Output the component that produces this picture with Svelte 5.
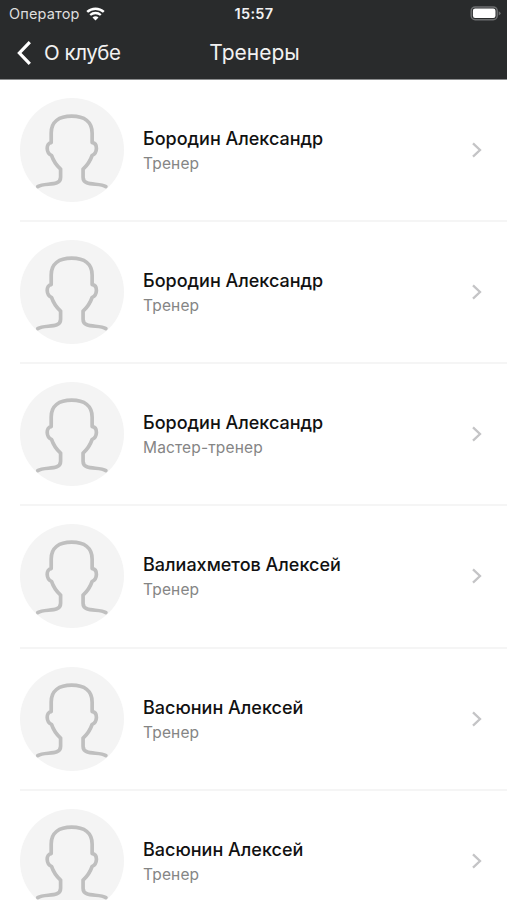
<script>
  const trainers = [
    { name: 'Бородин Александр', role: 'Тренер' },
    { name: 'Бородин Александр', role: 'Тренер' },
    { name: 'Бородин Александр', role: 'Мастер-тренер' },
    { name: 'Валиахметов Алексей', role: 'Тренер' },
    { name: 'Васюнин Алексей', role: 'Тренер' },
    { name: 'Васюнин Алексей', role: 'Тренер' }
  ];
</script>

<div class="screen">
  <header>
    <div class="status">
      <div class="carrier">
        <span>Оператор</span>
        <svg class="wifi" width="19" height="14" viewBox="0 0 19 14" fill="none" stroke="#fff">
          <path d="M1.2 4.9C5.8 .6 13.2 .6 17.8 4.9" stroke-width="2.5" />
          <path d="M4.2 8C7.2 5.3 11.8 5.3 14.8 8" stroke-width="2.3" />
          <path d="M6.5 10.4C8.2 8.9 10.8 8.9 12.5 10.4L9.5 13.5Z" fill="#fff" stroke="none" />
        </svg>
      </div>
      <time>15:57</time>
      <svg class="battery" width="31" height="15" viewBox="0 0 31 15">
        <rect x="1.2" y=".9" width="26" height="12.8" rx="4" fill="none" stroke="#6d6f70" stroke-width="1.5" />
        <rect x="2.9" y="2.6" width="22.6" height="9.4" rx="2.2" fill="#fff" />
        <path d="M28.7 5.2Q30.6 6 30.6 7.3T28.7 9.4Z" fill="#6d6f70" />
      </svg>
    </div>
    <nav>
      <div class="back">
        <svg width="16" height="24" viewBox="0 0 16 24" fill="none" stroke="#fff" stroke-width="3.2">
          <path d="M14.8 1.2L4.4 12L14.8 22.8" />
        </svg>
        <span>О клубе</span>
      </div>
      <h1>Тренеры</h1>
    </nav>
  </header>
  <ul>
    {#each trainers as trainer}
      <li>
        <svg class="avatar" viewBox="31 25 310 310">
          <circle cx="186" cy="180" r="155" fill="#f4f4f4" />
          <path
            d="M84 289C105 276 152 290 152 261V237C139 225 130 211 125 196C109 190 107 160 124 158V129C124 96 147 79 185 79S246 96 246 129V158C264 160 262 190 246 196C241 211 232 225 219 237V261C219 290 266 276 287 289"
            fill="none" stroke="#bfbfbf" stroke-width="11" stroke-linecap="round" stroke-linejoin="round" />
        </svg>
        <div class="info">
          <div class="name">{trainer.name}</div>
          <div class="role">{trainer.role}</div>
        </div>
        <svg class="chevron" width="12" height="16" viewBox="0 0 12 16" fill="none" stroke="#c4c4c6" stroke-width="2.3">
          <path d="M2 1.3L9 8L2 14.7" />
        </svg>
      </li>
    {/each}
  </ul>
</div>

<style>
  .screen {
    width: 507px;
    height: 900px;
    overflow: hidden;
    background: #fff;
    font-family: Inter, 'Liberation Sans', sans-serif;
  }
  header {
    box-sizing: border-box;
    height: 79.5px;
    background: #292b2c;
    border-bottom: 1px solid #8b8d8e;
    color: #f2f2f2;
  }
  .status,
  nav {
    display: grid;
    grid-template-columns: 1fr auto 1fr;
    align-items: center;
  }
  .status {
    height: 27px;
    padding: 0 6px 0 9px;
  }
  .carrier {
    display: flex;
    align-items: center;
    gap: 6px;
    font-size: 14.5px;
    line-height: 20px;
    letter-spacing: 0.15px;
    color: #dedede;
  }
  time {
    font-size: 14.5px;
    font-weight: 600;
    letter-spacing: 0.3px;
    margin-right: 2px;
  }
  .battery {
    justify-self: end;
  }
  nav {
    height: 51px;
    padding: 0 15px;
  }
  .back {
    display: flex;
    align-items: center;
    gap: 13px;
    font-size: 20.5px;
    letter-spacing: -0.45px;
  }
  h1 {
    margin: 0 -1px 0 1px;
    font-size: 21px;
    font-weight: 400;
  }
  ul {
    margin: 0;
    padding: 0.3px 0 0 20px;
    list-style: none;
  }
  li {
    box-sizing: border-box;
    display: flex;
    align-items: center;
    height: 142.2px;
    padding-right: 24px;
    border-bottom: 2px solid #f5f5f5;
  }
  .avatar {
    flex: none;
    width: 104px;
    height: 104px;
  }
  .info {
    flex: 1;
    margin-left: 19px;
    padding-top: 2px;
  }
  .name {
    font-size: 18px;
    line-height: 24px;
    font-weight: 500;
    color: #111;
    white-space: nowrap;
  }
  .role {
    margin-top: 2px;
    font-size: 15.5px;
    line-height: 22px;
    letter-spacing: 0.15px;
    color: #858585;
  }
</style>
